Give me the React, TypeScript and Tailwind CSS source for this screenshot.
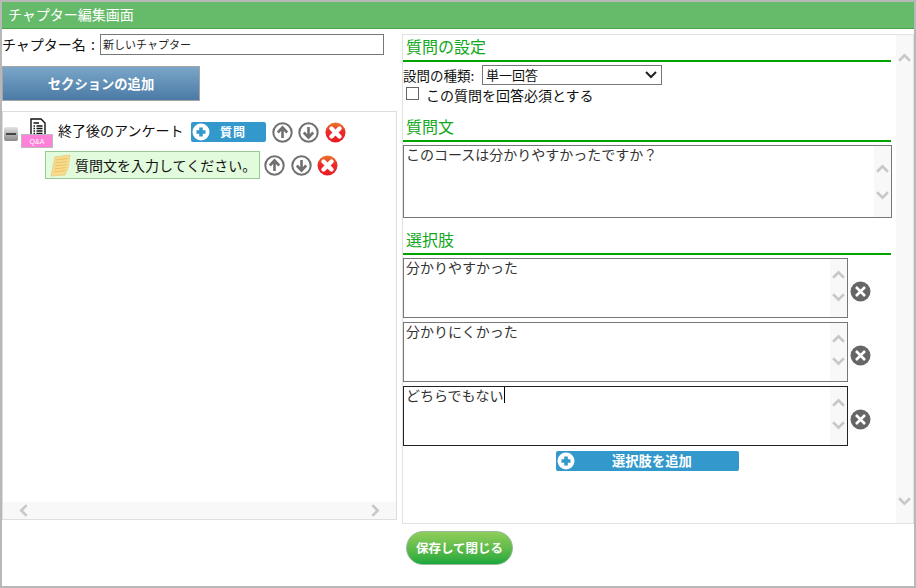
import React from "react";

function Chev({ dir, size = 13 }: { dir: "up" | "down" | "left" | "right"; size?: number }) {
  const d = { up: "M1 9 L6 4 L11 9", down: "M1 3 L6 8 L11 3", left: "M8 1 L3 6 L8 11", right: "M4 1 L9 6 L4 11" }[dir];
  return (
    <svg width={size} height={size} viewBox="0 0 12 12" className="block shrink-0">
      <path d={d} fill="none" stroke="#c8c8c8" strokeWidth="2.4" />
    </svg>
  );
}
function Arrow({ up }: { up?: boolean }) {
  return (
    <svg width="21" height="21" viewBox="0 0 21 21" className="block shrink-0">
      <circle cx="10.5" cy="10.5" r="9.2" fill="#fff" stroke="#707070" strokeWidth="2" />
      <g transform={up ? "" : "rotate(180 10.5 10.5)"}>
        <path d="M10.5 16 V6 M5.8 10.5 L10.5 5.5 L15.2 10.5" fill="none" stroke="#707070" strokeWidth="2.6" />
      </g>
    </svg>
  );
}
function RedX({ id }: { id: string }) {
  return (
    <svg width="21" height="21" viewBox="0 0 21 21" className="block shrink-0">
      <defs>
        <linearGradient id={id} x1="0" y1="0" x2="0" y2="1">
          <stop offset="0" stopColor="#ea7a2a" />
          <stop offset="0.45" stopColor="#ec2b2b" />
          <stop offset="1" stopColor="#e81c24" />
        </linearGradient>
      </defs>
      <circle cx="10.5" cy="10.5" r="10" fill={`url(#${id})`} />
      <path d="M6.5 6.5 L14.5 14.5 M14.5 6.5 L6.5 14.5" stroke="#fff" strokeWidth="4.4" strokeLinecap="round" />
    </svg>
  );
}
function GrayX() {
  return (
    <svg width="21" height="21" viewBox="0 0 21 21" className="block shrink-0">
      <circle cx="10.5" cy="10.5" r="10" fill="#666" />
      <path d="M6 6 L15 15 M15 6 L6 15" stroke="#fff" strokeWidth="2.6" />
    </svg>
  );
}
function PlusDisc() {
  return (
    <svg width="18" height="18" viewBox="0 0 18 18" className="block shrink-0">
      <circle cx="9" cy="9" r="8.5" fill="#fff" />
      <path d="M9 4.5 V13.5 M4.5 9 H13.5" stroke="#3399cc" strokeWidth="3.6" />
    </svg>
  );
}
function Box({ text, tall, focused, mark }: { text: string; tall?: boolean; focused?: boolean; mark?: boolean }) {
  return (
    <div className={`flex ${tall ? "h-[73px]" : "h-[60px]"} border ${focused ? "border-[#222]" : "border-[#777]"} bg-white`}>
      <div className="flex-1 pl-[2px] text-[14px] leading-[16px] text-[#333] flex items-start">
        <span>{text}</span>
        {mark && <span className="inline-block w-px h-[16px] bg-black" />}
      </div>
      <div className={`w-[17px] bg-[#f8f8f8] flex flex-col items-center ${tall ? "pt-[16px] gap-[14px]" : "pt-[9px] gap-[10px]"}`}>
        <Chev dir="up" />
        <Chev dir="down" />
      </div>
    </div>
  );
}
function Heading({ children }: { children: string }) {
  return (
    <div className="border-b-2 border-[#00a400] h-[27px] pl-[3px] text-[16px] leading-[23px] text-[#12a822] w-[488px]">{children}</div>
  );
}
function Choice({ text, focused, mark }: { text: string; focused?: boolean; mark?: boolean }) {
  return (
    <div className="flex items-center gap-[2px]">
      <div className="w-[445px]">
        <Box text={text} focused={focused} mark={mark} />
      </div>
      <div className="pt-[6px]"><GrayX /></div>
    </div>
  );
}
function Note() {
  return (
    <svg width="21" height="23" viewBox="0 0 21 23" className="shrink-0">
      <path d="M5 3 L20 1 L18 14 L15 21 L1 22 Z" fill="#f7dc8e" stroke="#e9cd80" strokeWidth="0.8" />
      <path d="M6 6 L17.5 4.5 M5.5 9 L17 7.5 M5 12 L16.5 10.5 M4.5 15 L16 13.5 M4 18 L15 16.5" stroke="#ecc264" strokeWidth="1" />
    </svg>
  );
}

export default function App() {
  return (
    <div
      className="w-[916px] h-[588px] bg-white border-2 border-[#b8b8b8] flex flex-col overflow-hidden text-[#111]"
      style={{ fontFamily: '"Noto Sans CJK JP", "Liberation Sans", sans-serif' }}
    >
      <div className="h-[27px] shrink-0 bg-[#66bb6a] border-b border-[#4ca350] pl-[6px] text-[14px] leading-[25px] text-white">
        チャプター編集画面
      </div>
      <div className="flex h-[495px] shrink-0">
        <div className="w-[395px] shrink-0 flex flex-col">
          <div className="flex items-center h-[21px] mt-[5px]">
            <span className="text-[14px] leading-[18px] mb-[2px] whitespace-nowrap w-[98px] [word-spacing:2px]">チャプター名 :</span>
            <div className="w-[284px] h-[21px] border border-[#777] pl-[2px] text-[11px] leading-[18px] text-[#222]">新しいチャプター</div>
          </div>
          <div className="mt-[11px] w-[198px] h-[35px] border border-[#a5a5a5] bg-gradient-to-b from-[#7ba6c9] to-[#4a7aa5] flex items-center justify-center text-white font-bold text-[13.3px]">
            セクションの追加
          </div>
          <div className="mt-[10px] w-[395px] h-[409px] border border-[#dedede] flex flex-col">
            <div className="flex-1 pt-[8px] pl-[1px]">
              <div className="flex items-center h-[24px]">
                <div className="w-[14px] h-[14px] mt-[3px] rounded-[2px] bg-gradient-to-b from-[#e4e4e4] to-[#8a8a8a] flex items-center justify-center shrink-0">
                  <div className="w-[10px] h-[2px] bg-[#444]" />
                </div>
                <div className="relative w-[32px] h-[32px] ml-[3px] mr-[5px] shrink-0">
                  <svg width="16" height="21" viewBox="0 0 16 21" className="absolute left-[9px] top-[2px]">
                    <path d="M1 1 H11 L15 5 V20 H1 Z" fill="#fff" stroke="#111" strokeWidth="1.4" />
                    <path d="M3.5 5 H9 M3.5 8 H5 M6.5 8 H12.5 M3.5 10.5 H5 M6.5 10.5 H12.5 M3.5 13 H5 M6.5 13 H12.5 M3.5 15.5 H5 M6.5 15.5 H12.5" stroke="#111" strokeWidth="1.6" />
                  </svg>
                  <div className="absolute left-0 top-[18px] w-[32px] h-[14px] bg-[#ff80d8] border border-[#bbb] text-white text-[7px] leading-[13px] text-center" style={{ fontFamily: '"Liberation Sans", sans-serif' }}>Q&amp;A</div>
                </div>
                <span className="text-[14px] whitespace-nowrap mr-[6px] mb-[3px] w-[127px]">終了後のアンケート</span>
                <div className="w-[75px] h-[20px] bg-[#3399cc] rounded-[2px] flex items-center pl-[1px] shrink-0">
                  <PlusDisc />
                  <span className="ml-[10px] text-white text-[12px] font-bold tracking-[1px]">質問</span>
                </div>
                <div className="flex items-center gap-[5.5px] ml-[5.5px]">
                  <Arrow up />
                  <Arrow />
                  <RedX id="r1" />
                </div>
              </div>
              <div className="flex items-center mt-[7px] ml-[41px]">
                <div className="w-[215px] h-[28px] bg-[#e2fbdd] border border-[#98c896] flex items-center pl-[4px] shrink-0">
                  <Note />
                  <span className="ml-[4px] text-[14px] whitespace-nowrap">質問文を入力してください。</span>
                </div>
                <div className="flex items-center gap-[5.5px] ml-[4px]">
                  <Arrow up />
                  <Arrow />
                  <RedX id="r2" />
                </div>
              </div>
            </div>
            <div className="h-[17px] bg-[#f8f8f8] flex items-center justify-between pl-[15px] pr-[15px]">
              <Chev dir="left" />
              <Chev dir="right" />
            </div>
          </div>
        </div>
        <div className="ml-[5px] mt-[5px] w-[512px] h-[490px] border border-[#e2e2e2] flex">
          <div className="w-[493px]">
            <Heading>質問の設定</Heading>
            <div className="flex items-center h-[20px] mt-[3px] text-[13.5px]">
              <span className="w-[79px] whitespace-nowrap">設問の種類:</span>
              <div className="w-[180px] h-[20px] border border-[#777] pl-[3px] flex items-center justify-between pr-[4px] text-[13px]">
                <span>単一回答</span>
                <svg width="12" height="8" viewBox="0 0 12 8"><path d="M1 1 L6 6 L11 1" fill="none" stroke="#222" strokeWidth="2" /></svg>
              </div>
            </div>
            <div className="flex items-center h-[20px] text-[14px] pl-[3px]">
              <div className="w-[13px] h-[13px] border border-[#666] mr-[7px] mb-[3px]" />
              <span>この質問を回答必須とする</span>
            </div>
            <div className="mt-[10px]"><Heading>質問文</Heading></div>
            <div className="mt-[3px] w-[489px]">
              <Box text="このコースは分かりやすかったですか？" tall />
            </div>
            <div className="mt-[10px]"><Heading>選択肢</Heading></div>
            <div className="mt-[3px] flex flex-col gap-[4px]">
              <Choice text="分かりやすかった" />
              <Choice text="分かりにくかった" />
              <Choice text="どちらでもない" focused mark />
            </div>
            <div className="mt-[5px] ml-[153px] w-[183px] h-[20px] bg-[#3399cc] rounded-[2px] flex items-center pl-[1px]">
              <PlusDisc />
              <span className="ml-[37px] text-white text-[13.3px] font-bold whitespace-nowrap">選択肢を追加</span>
            </div>
          </div>
          <div className="w-[17px] bg-[#f8f8f8] flex flex-col items-center justify-between pt-[16px] pb-[15px]">
            <Chev dir="up" />
            <Chev dir="down" />
          </div>
        </div>
      </div>
      <div className="ml-[404px] mt-[7px] w-[107px] h-[34px] rounded-full border border-[#9ab89a] bg-gradient-to-b from-[#8fce5a] to-[#14a83c] flex items-center justify-center text-white font-bold text-[12.5px]">
        保存して閉じる
      </div>
    </div>
  );
}
